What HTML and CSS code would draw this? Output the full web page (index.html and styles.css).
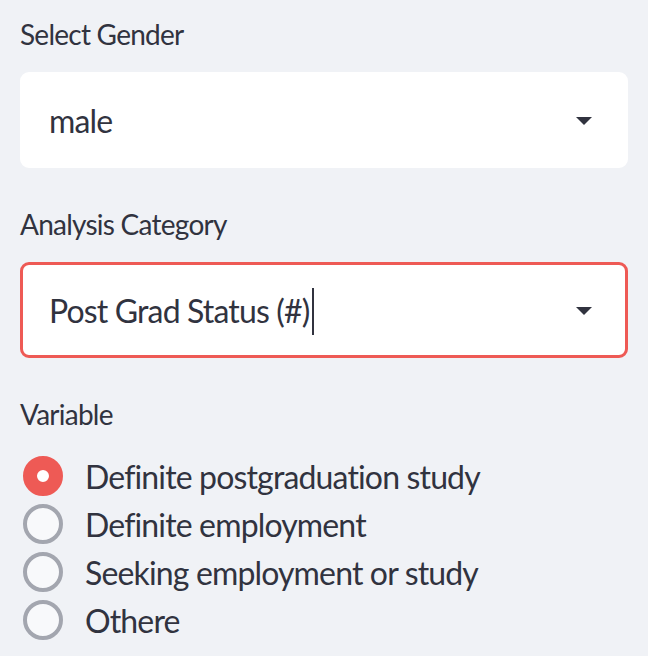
FILE: index.html
```html
<!DOCTYPE html>
<html>
<head>
<meta charset="utf-8">
<link rel="stylesheet" href="styles.css">
</head>
<body>
<div class="sidebar">
  <div class="group">
    <div class="label">Select Gender</div>
    <div class="select">
      <span class="value">male</span>
      <svg class="arrow" width="16" height="8" viewBox="0 0 16 8"><path d="M0 0H16L8 8Z" fill="#31333f"/></svg>
    </div>
  </div>
  <div class="group">
    <div class="label">Analysis Category</div>
    <div class="select focused">
      <span class="value">Post Grad Status (#)<span class="caret"></span></span>
      <svg class="arrow" width="16" height="8" viewBox="0 0 16 8"><path d="M0 0H16L8 8Z" fill="#31333f"/></svg>
    </div>
  </div>
  <div class="group">
    <div class="label">Variable</div>
    <div class="radios">
      <div class="radio checked"><span class="dot"></span><span class="text">Definite postgraduation study</span></div>
      <div class="radio"><span class="dot"></span><span class="text">Definite employment</span></div>
      <div class="radio"><span class="dot"></span><span class="text">Seeking employment or study</span></div>
      <div class="radio"><span class="dot"></span><span class="text">Othere</span></div>
    </div>
  </div>
</div>
</body>
</html>
```

FILE: styles.css
```css
html, body {
  margin: 0;
  padding: 0;
  background: #f0f2f6;
}
body {
  font-family: "Source Sans Pro", Lato, "Open Sans", sans-serif;
  color: #31333f;
  font-variant-ligatures: none;
}
.sidebar {
  padding: 14px 20px 0 20px;
  display: flex;
  flex-direction: column;
  gap: 36px;
}
.label {
  font-size: 28px;
  line-height: 40px;
  letter-spacing: -0.75px;
  margin-bottom: 18px;
}
.select {
  box-sizing: border-box;
  height: 96px;
  background: #ffffff;
  border: 3px solid #ffffff;
  border-radius: 9px;
  display: flex;
  align-items: center;
  justify-content: space-between;
  padding: 2px 33px 0 26px;
}
.select.focused {
  border-color: #ee5a55;
}
.value {
  font-size: 32px;
  line-height: 48px;
  letter-spacing: -0.85px;
  display: flex;
  align-items: center;
}
.caret {
  display: inline-block;
  width: 2px;
  height: 47px;
  background: #31333f;
  margin-left: 3px;
}
.radios {
  display: flex;
  flex-direction: column;
  margin-top: 2px;
}
.radio {
  display: flex;
  align-items: center;
  height: 48px;
}
.dot {
  box-sizing: border-box;
  width: 40px;
  height: 40px;
  border-radius: 50%;
  border: 4px solid #a3a6af;
  background: #f8f9fb;
  margin-left: 3px;
  margin-right: 22px;
}
.radio.checked .dot {
  border: 14px solid #ee5a55;
  background: #ffffff;
}
.text {
  font-size: 32px;
  line-height: 48px;
  letter-spacing: -0.85px;
  padding-top: 2px;
}
```
